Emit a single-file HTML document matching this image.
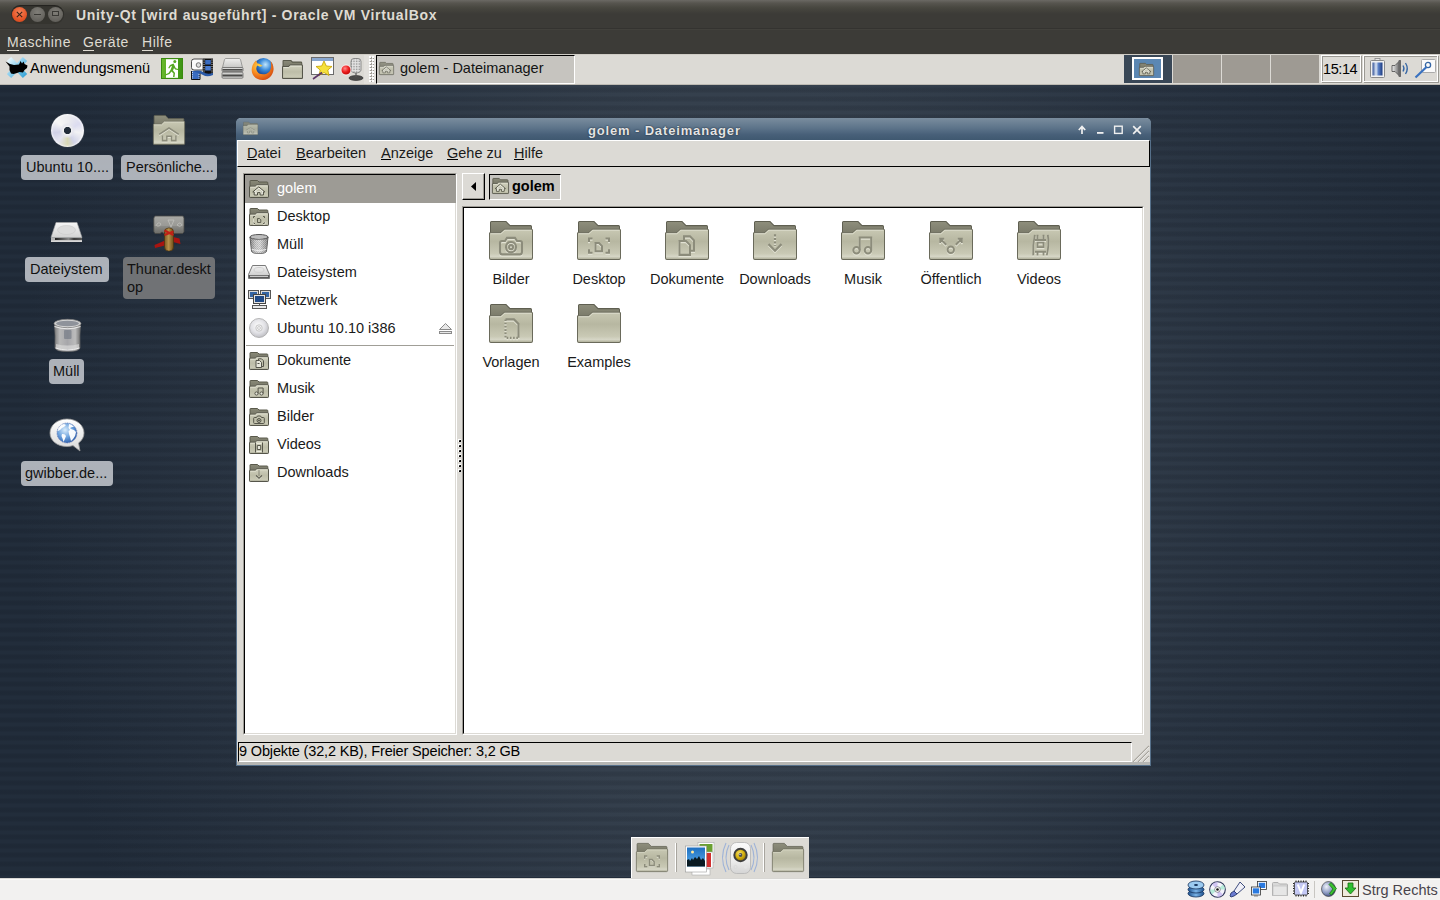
<!DOCTYPE html>
<html><head><meta charset="utf-8">
<style>
*{margin:0;padding:0;box-sizing:border-box}
html,body{width:1440px;height:900px;overflow:hidden;background:#252f3d;font-family:"Liberation Sans",sans-serif}
.a{position:absolute}
svg{display:block;position:absolute;overflow:visible}
.t{position:absolute;white-space:nowrap;line-height:1}
#htitle{left:0;top:0;width:1440px;height:29px;background:linear-gradient(#6b6964 0px,#57554f 3px,#47463f 8px,#3c3b37 14px)}
#hmenu{left:0;top:29px;width:1440px;height:25px;background:#3c3b37;border-top:1px solid #42413c;box-shadow:0 -1px 0 #343330}
.hm{color:#dfdbd2;font-size:14px;letter-spacing:.5px}
.hm u{text-decoration:none;border-bottom:1px solid #dfdbd2}
#panel{left:0;top:54px;width:1440px;height:31px;background:#dcdad5;box-shadow:inset 0 1px 0 #cfccc5,inset 0 -1px 0 #bdbab3}
#desk{left:0;top:85px;width:1440px;height:792px;
 background:repeating-linear-gradient(180deg,rgba(6,10,18,0) 0px,rgba(6,10,18,0) 1.5px,rgba(6,10,18,.11) 3.5px,rgba(6,10,18,.13) 5px,rgba(6,10,18,.11) 6.5px,rgba(6,10,18,0) 8.5px,rgba(6,10,18,0) 9px),radial-gradient(ellipse 720px 900px at 740px 365px,#3a4451 0%,#35404d 40%,#2a3543 70%,#222d3b 100%)}
#vbstat{left:0;top:877px;width:1440px;height:23px;background:#f2f1f0;border-top:1px solid #222c3a;box-shadow:inset 0 1px 0 #d8d7d4,inset 0 2px 0 #f9f9f8}
.g{color:#1a1a1a;font-size:14.5px;letter-spacing:0;margin-top:-1px}
.g u{text-decoration:none;border-bottom:1px solid #000;display:inline-block;line-height:1;height:13.6px}
.dlab{position:absolute;background:rgba(200,204,210,.84);border-radius:4px}
.dlab .t{color:#141414}
</style></head><body>
<svg width="0" height="0" style="position:absolute">
 <defs>
  <linearGradient id="fbk" x1="0" y1="0" x2="0" y2="1"><stop offset="0" stop-color="#8e8e7c"/><stop offset="1" stop-color="#747464"/></linearGradient>
  <linearGradient id="ffr" x1="0" y1="0" x2="0" y2="1"><stop offset="0" stop-color="#c8c8b3"/><stop offset=".4" stop-color="#b7b7a1"/><stop offset=".8" stop-color="#c9c9b5"/><stop offset=".9" stop-color="#d6d6c6"/><stop offset="1" stop-color="#a9a993"/></linearGradient>
  <g id="fold">
   <path d="M2.5 0.5H17L21 4.5H41.5Q42.5 4.5 42.5 5.5V16H1.5V1.5Q1.5 .5 2.5 .5Z" fill="url(#fbk)" stroke="#5f5f51" stroke-width="1"/>
   <path d="M1 11.5H11.5L15.5 8H42.5Q43.5 8 43.5 9V36Q43.5 37.5 42 37.5H2Q.5 37.5 .5 36V12Q.5 11.5 1 11.5Z" fill="url(#ffr)" stroke="#6a6a5b" stroke-width="1"/>
   <path d="M1.5 12.5H11.8L15.8 9H42.5" stroke="#dcdccb" stroke-width="1" fill="none"/>
  </g>
  <g id="foldhome"><use href="#fold"/>
   <path d="M8.5 24.5L22 16.5 35.5 24.5M13 26V32.5H19V27H25.5V32.5H31.5V26" stroke="#e2e2d4" stroke-width="2" fill="none" transform="translate(0 1.2)"/><path d="M8.5 24.5L22 16.5 35.5 24.5M13 26V32.5H19V27H25.5V32.5H31.5V26" stroke="#8c8c7b" stroke-width="2" fill="none"/>
  </g>

  <g id="em-cam" fill="none" stroke-width="2.1"><path d="M13 19.5H16L18 16.5H26L28 19.5H31Q33 19.5 33 21.5V30Q33 32.5 31 32.5H13Q11 32.5 11 30V21.5Q11 19.5 13 19.5Z"/><circle cx="22" cy="25.5" r="5"/><circle cx="22" cy="25.5" r="2"/></g>
  <g id="em-desk" fill="none" stroke-width="2"><path d="M12 20.5V17H15.5M28.5 17H32V20.5M32 27.5V31H28.5M15.5 31H12V27.5"/><path d="M18.5 21.5H22L25 24.5V29.5H18.5Z"/></g>
  <g id="em-docs" fill="none" stroke-width="2"><path d="M19 19V15H25L29 19V29H25"/><path d="M14.5 19.5H21L25 23.5V33H14.5Z"/></g>
  <g id="em-down" fill="none" stroke-width="2.2"><path d="M22 13V24" stroke-dasharray="2 1.5"/><path d="M15.5 22.5L22 29 28.5 22.5"/></g>
  <g id="em-music" fill="none" stroke-width="2"><circle cx="15.5" cy="28.5" r="3.2"/><circle cx="27" cy="28.5" r="3.2"/><path d="M18.7 28.5V16H30.2V28.5"/></g>
  <g id="em-pub" fill="none" stroke-width="1.9"><circle cx="21.8" cy="28" r="3.2"/><path d="M17.2 23.2L11.5 17.6M11.2 21.5V17.3H15.2M26.8 23.2L32.5 17.6M28.8 17.3H32.8V21.5"/></g>
  <g id="em-vid" fill="none" stroke-width="1.8"><path d="M17.8 13.5Q15.6 23 16.2 33.5M30.8 13.5Q32.4 23 29.8 33.5"/><path d="M20.5 13.5V18.5M26.5 13.5V18.5M18 18.5H29M20.5 21H26.5V25.5H20.5ZM18 30H29M20.5 30V33.5M26.5 30V33.5"/></g>
  <g id="em-tpl" fill="none" stroke-width="2.1"><path d="M16.5 15H25L29.5 19.5V33"/><path d="M16.5 15V33H29.5" stroke-dasharray="1.6 1.6"/></g>
  <g id="f-cam"><use href="#fold"/><use href="#em-cam" stroke="#e2e2d4" transform="translate(0 1.2)"/><use href="#em-cam" stroke="#8c8c7b"/></g>
  <g id="f-desk"><use href="#fold"/><use href="#em-desk" stroke="#e2e2d4" transform="translate(0 1.2)"/><use href="#em-desk" stroke="#8c8c7b"/></g>
  <g id="f-docs"><use href="#fold"/><use href="#em-docs" stroke="#e2e2d4" transform="translate(0 1.2)"/><use href="#em-docs" stroke="#8c8c7b"/></g>
  <g id="f-down"><use href="#fold"/><use href="#em-down" stroke="#e2e2d4" transform="translate(0 1.2)"/><use href="#em-down" stroke="#8c8c7b"/></g>
  <g id="f-music"><use href="#fold"/><use href="#em-music" stroke="#e2e2d4" transform="translate(0 1.2)"/><use href="#em-music" stroke="#8c8c7b"/></g>
  <g id="f-pub"><use href="#fold"/><use href="#em-pub" stroke="#e2e2d4" transform="translate(0 1.2)"/><use href="#em-pub" stroke="#8c8c7b"/></g>
  <g id="f-vid"><use href="#fold"/><use href="#em-vid" stroke="#e2e2d4" transform="translate(0 1.2)"/><use href="#em-vid" stroke="#8c8c7b"/></g>
  <g id="f-tpl"><use href="#fold"/><use href="#em-tpl" stroke="#e2e2d4" transform="translate(0 1.2)"/><use href="#em-tpl" stroke="#8c8c7b"/></g>
  <linearGradient id="trg" x1="0" x2="1"><stop offset="0" stop-color="#6c6c6c"/><stop offset=".3" stop-color="#d8d8d8"/><stop offset=".55" stop-color="#f4f4f4"/><stop offset="1" stop-color="#707070"/></linearGradient>
  <pattern id="mesh" width="2" height="2" patternUnits="userSpaceOnUse"><rect width="2" height="2" fill="#c8c8c8"/><rect width="1" height="1" fill="#7a7a7a"/><rect x="1" y="1" width="1" height="1" fill="#8a8a8a"/></pattern>
  <g id="i-trash"><ellipse cx="10" cy="3" rx="9" ry="2.5" fill="#bdbdbd" stroke="#555"/><path d="M1 3L2.5 17Q3 19.5 10 19.5 17 19.5 17.5 17L19 3Q19 5.5 10 5.5 1 5.5 1 3Z" fill="url(#mesh)" stroke="#555"/><path d="M1 3L2.5 17Q3 19.5 10 19.5 17 19.5 17.5 17L19 3Q19 5.5 10 5.5 1 5.5 1 3Z" fill="url(#trg)" opacity=".55"/><path d="M2.8 15.5Q10 18 17.2 15.5" stroke="#eee" fill="none"/></g>
  <linearGradient id="hdg" x1="0" y1="0" x2="0" y2="1"><stop offset="0" stop-color="#f4f4f4"/><stop offset="1" stop-color="#c4c4c4"/></linearGradient>
  <g id="i-hdd"><path d="M4.5 .5H17.5L21.5 9.5V13.5H.5V9.5Z" fill="url(#hdg)" stroke="#7a7a7a"/><rect x="1" y="10" width="20" height="3" fill="#5a5a5a"/><rect x="2" y="10.8" width="18" height="1" fill="#e6e6e6"/><ellipse cx="11" cy="5" rx="5" ry="2.5" fill="none" stroke="#d0d0d0"/></g>
  <g id="i-net"><rect x=".5" y=".5" width="10" height="8" fill="#ddd" stroke="#555"/><rect x="2" y="2" width="7" height="5" fill="#3465a4"/><rect x="12.5" y=".5" width="10" height="8" fill="#ddd" stroke="#555"/><rect x="14" y="2" width="7" height="5" fill="#3465a4"/><rect x="5.5" y="4.5" width="12" height="9" fill="#e4e4e4" stroke="#444"/><rect x="7" y="6" width="9" height="6" fill="#204a87"/><rect x="4.5" y="15.5" width="14" height="3" fill="#e8e8e8" stroke="#555"/><path d="M11.5 13.5V15.5" stroke="#555"/></g>
  <radialGradient id="cdg" cx=".45" cy=".4" r=".6"><stop offset="0" stop-color="#fdfdfd"/><stop offset=".6" stop-color="#e2e2e6"/><stop offset="1" stop-color="#bfbfc4"/></radialGradient>
  <g id="i-cd"><circle cx="10" cy="10" r="9.5" fill="url(#cdg)" stroke="#a8a8a8" stroke-width=".8"/><circle cx="10" cy="10" r="3.2" fill="#f4f4f4" stroke="#bbb" stroke-width=".8"/><circle cx="10" cy="10" r="1.4" fill="#fff" stroke="#999" stroke-width=".5"/></g>

  <linearGradient id="sbk" x1="0" y1="0" x2="0" y2="1"><stop offset="0" stop-color="#8a8a78"/><stop offset="1" stop-color="#727264"/></linearGradient>
  <linearGradient id="sfr" x1="0" y1="0" x2="0" y2="1"><stop offset="0" stop-color="#d2d2c0"/><stop offset=".5" stop-color="#bdbda8"/><stop offset=".85" stop-color="#c8c8b4"/><stop offset="1" stop-color="#a8a894"/></linearGradient>
  <g id="sf">
   <path d="M1.5 .5H8.5L10 2H18Q18.8 2 18.8 2.8V8H1V1Q1 .5 1.5 .5Z" fill="url(#sbk)" stroke="#5a5a4c" stroke-width="1"/>
   <path d="M1 6.2H6.2L7.8 4.8H18.8Q19.5 4.8 19.5 5.5V16.8Q19.5 17.5 18.8 17.5H1.2Q.5 17.5 .5 16.8V6.8Q.5 6.2 1 6.2Z" fill="url(#sfr)" stroke="#55554a" stroke-width="1"/>
   <path d="M1.5 7.2H6.5L8 5.8H18.5" stroke="#e6e6d8" stroke-width=".8" fill="none"/>
  </g>
  <g id="sem-home"><path d="M3.8 11.9L9.8 6.9 15.8 11.9 14.4 11.9V15H11.1V12.6H8.5V15H5.2V11.9Z" fill="#f2f2ea" stroke="#4e4e40" stroke-width="1" stroke-linejoin="miter"/><path d="M6.6 11.2L9.8 8.6 13 11.2V13.8H12.1V11.5H7.5V13.8H6.6Z" fill="#c8c8b4"/></g>
  <g id="sem-desk" fill="none" stroke="#5e5e50" stroke-width="1"><path d="M4.5 10V8.5H6M14 8.5H15.5V10M15.5 14V15.5H14M6 15.5H4.5V14"/><path d="M8.5 10.5H10.5L11.8 11.8V14.5H8.5Z"/><path d="M4.5 11V16.5H6M14 16.5H16V14" stroke="#ecece0" stroke-width=".6"/></g>
  <g id="sem-docs" fill="none" stroke="#55554a" stroke-width="1"><path d="M9.5 8V6.8H12.5L14.5 8.8V14.5H12.5"/><path d="M7 8.5H10.5L12.5 10.5V15.5H7Z" fill="#e8e8dc"/><path d="M8.5 11.5H10.5" /></g>
  <g id="sem-music" fill="none" stroke="#55554a" stroke-width="1"><circle cx="7.5" cy="13.5" r="1.6" fill="#e8e8dc"/><circle cx="12.5" cy="13.5" r="1.6" fill="#e8e8dc"/><path d="M9.1 13.5V8H14.1V13.5"/></g>
  <g id="sem-cam" fill="none" stroke="#55554a" stroke-width="1"><path d="M5.5 9.5H7.5L8.5 8H11.5L12.5 9.5H14.5Q15.3 9.5 15.3 10.3V14.7Q15.3 15.5 14.5 15.5H5.5Q4.7 15.5 4.7 14.7V10.3Q4.7 9.5 5.5 9.5Z"/><circle cx="10" cy="12.5" r="2" /><circle cx="10" cy="12.5" r=".6" fill="#55554a"/></g>
  <g id="sem-vid" fill="none" stroke="#55554a" stroke-width="1"><path d="M6.5 6.5V16.5M13.5 6.5V16.5"/><path d="M8.3 9.5H11.7V13.5H8.3Z" fill="#e8e8dc"/><path d="M7.5 7.5H12.5M7.5 15.5H12.5" stroke="#ecece0"/></g>
  <g id="sem-down" fill="none" stroke="#55554a" stroke-width="1.1"><path d="M10 6.5V12" stroke-dasharray="1 1"/><path d="M7 11.5L10 14.5 13 11.5"/><path d="M7 12.5L10 15.5 13 12.5" stroke="#ecece0" stroke-width=".6"/></g>
  <g id="sf-home"><use href="#sf"/><use href="#sem-home"/></g>
  <g id="sf-desk"><use href="#sf"/><use href="#sem-desk"/></g>
  <g id="sf-docs"><use href="#sf"/><use href="#sem-docs"/></g>
  <g id="sf-music"><use href="#sf"/><use href="#sem-music"/></g>
  <g id="sf-cam"><use href="#sf"/><use href="#sem-cam"/></g>
  <g id="sf-vid"><use href="#sf"/><use href="#sem-vid"/></g>
  <g id="sf-down"><use href="#sf"/><use href="#sem-down"/></g>
 </defs>
</svg>
<!-- HOST TITLE -->
<div id="htitle" class="a">
 <div class="a" style="left:11px;top:5px;width:53px;height:19px;border-radius:10px;background:#35342f;box-shadow:inset 0 1px 1px rgba(0,0,0,.35)"></div>
 <div class="a" style="left:12px;top:6.5px;width:15px;height:15px;border-radius:50%;background:radial-gradient(circle at 50% 35%,#f5845b,#e45527 60%,#c8441c)"></div>
 <svg style="left:12px;top:6.5px" width="15" height="15"><path d="M4.8 4.8L10.2 10.2M10.2 4.8L4.8 10.2" stroke="#3c2418" stroke-width="1.1"/></svg>
 <div class="a" style="left:30px;top:6.5px;width:15px;height:15px;border-radius:50%;background:radial-gradient(circle at 50% 35%,#807e78,#64625d 70%,#595853)"></div>
 <div class="a" style="left:34px;top:13.5px;width:7px;height:1px;background:#3a3935"></div>
 <div class="a" style="left:48px;top:6.5px;width:15px;height:15px;border-radius:50%;background:radial-gradient(circle at 50% 35%,#807e78,#64625d 70%,#595853)"></div>
 <div class="a" style="left:52px;top:11px;width:7px;height:5px;border:1px solid #3a3935"></div>
 <div class="t" style="left:76px;top:7.5px;color:#dfdbd2;font-size:14px;font-weight:bold;letter-spacing:.68px">Unity-Qt [wird ausgeführt] - Oracle VM VirtualBox</div>
</div>
<div id="hmenu" class="a">
 <div class="t hm" style="left:7px;top:5px"><u>M</u>aschine</div>
 <div class="t hm" style="left:83px;top:5px"><u>G</u>eräte</div>
 <div class="t hm" style="left:142px;top:5px"><u>H</u>ilfe</div>
</div>
<!-- GUEST PANEL -->
<div id="panel" class="a">
 <!-- xfce menu icon -->
 <svg style="left:5px;top:3px" width="24" height="23" viewBox="0 0 24 23">
  <defs><linearGradient id="xb" x1="0" y1="0" x2="1" y2="1"><stop offset="0" stop-color="#e8f6fc"/><stop offset=".45" stop-color="#8fd0ee"/><stop offset="1" stop-color="#3aa6d8"/></linearGradient></defs>
  <path d="M4 2L20 19M20 2L4 19" stroke="url(#xb)" stroke-width="6"/>
  <path d="M0.5 4.5L5 7 9 8 14 7.5 15.5 4 17 6.5 18.5 4.5 19.5 7 22.5 8.5 22 11 19.5 13 18 15.5 14.5 15 12 16 8.5 17 6 16.5 4.5 13 4.5 9.5Z" fill="#000"/>
 </svg>
 <div class="t g" style="left:30px;top:8px;color:#000">Anwendungsmenü</div>
 <!-- exit icon -->
 <svg style="left:161px;top:4px" width="22" height="21" viewBox="0 0 22 21">
  <defs><linearGradient id="exg" x1="0" x2="1"><stop offset="0" stop-color="#6ab82e"/><stop offset="1" stop-color="#3c9412"/></linearGradient></defs>
  <rect x=".5" y=".5" width="21" height="20" fill="url(#exg)" stroke="#3a8a10"/>
  <rect x="5" y="1.2" width="12" height="18.6" fill="#fff"/>
  <circle cx="13.8" cy="3.6" r="1.5" fill="#56a822"/>
  <path d="M12.5 5.6L9 7 7.2 10 8.2 10.5 9.8 8.3 11 8 9.5 12 7.5 15 4 16.5 4.5 17.6 8.5 16 10.5 13.5 12.5 15.5 12 19 13.5 19 14 15 12 12.5 13 10 14.2 11.5 17 12 17.2 11 14.8 10.3Z" fill="#56a822"/>
 </svg>
 <!-- multimedia icon -->
 <svg style="left:191px;top:4px" width="23" height="22" viewBox="0 0 23 22">
  <path d="M3 1H12V12H3Q.5 12 .5 9.5V3.5Q.5 1 3 1Z" fill="#fafafa" stroke="#3a3a3a" stroke-width=".9"/>
  <circle cx="7.5" cy="7" r="2.3" fill="#ddd" stroke="#6a6a6a" stroke-width=".9"/>
  <rect x="12" y=".5" width="10" height="16.5" fill="#111"/>
  <path d="M13 1.5V16M21 1.5V16" stroke="#fff" stroke-width=".9" stroke-dasharray="1 1.2"/>
  <rect x="14.2" y="2" width="5.6" height="4.5" fill="#3a6cc0"/><rect x="14.2" y="8" width="5.6" height="4.5" fill="#4a7cd0"/>
  <path d="M1 13.5Q8 11.5 12 14 16 17 22 15V17Q16 19.5 12 17 8 14.5 1 16.5Z" fill="#2a5aa8"/>
  <path d="M.5 13V21.5H9V15.5" fill="#3a6cc0" stroke="#111" stroke-width="1"/>
  <path d="M1.5 14V21M8 16V21" stroke="#fff" stroke-width=".8" stroke-dasharray="1 1.2"/>
 </svg>
 <!-- hdd icon -->
 <svg style="left:221px;top:4px" width="23" height="21" viewBox="0 0 23 21">
  <defs><linearGradient id="hdp" x1="0" y1="0" x2="0" y2="1"><stop offset="0" stop-color="#f0f0ee"/><stop offset="1" stop-color="#c8c8c6"/></linearGradient></defs>
  <path d="M3.5 1.5Q4 .5 5 .5H18Q19 .5 19.5 1.5L21.5 9.5H1.5Z" fill="url(#hdp)" stroke="#8a8a88" stroke-width=".8"/>
  <rect x="1" y="9.5" width="21" height="4" rx=".8" fill="#d8d8d6" stroke="#6a6a68" stroke-width=".8"/>
  <rect x="1.5" y="11" width="20" height="1.6" fill="#4a4a48"/>
  <rect x="1" y="14.2" width="21" height="6" rx="1" fill="#d0d0ce" stroke="#6a6a68" stroke-width=".8"/>
  <rect x="1.5" y="16.5" width="20" height="2" fill="#4a4a48"/>
 </svg>
 <!-- firefox -->
 <svg style="left:250px;top:3px" width="24" height="24" viewBox="0 0 24 24">
  <defs><radialGradient id="ffb" cx=".6" cy=".35" r=".55"><stop offset="0" stop-color="#bfe6ff"/><stop offset=".55" stop-color="#3a8ad8"/><stop offset="1" stop-color="#1a4a98"/></radialGradient>
  <radialGradient id="ffo" cx=".35" cy=".3" r=".85"><stop offset="0" stop-color="#ffd84a"/><stop offset=".45" stop-color="#f88a20"/><stop offset="1" stop-color="#c8380c"/></radialGradient></defs>
  <circle cx="13.5" cy="10.5" r="9.5" fill="url(#ffb)"/>
  <path d="M6 3.5C2.5 6.5 1 11 2 15.5 3.5 20.5 8.5 23.5 13.5 23 19 22.5 23 18 23.5 13 24 9 22 5.5 20.5 4 21.5 7 21.5 11 19.5 14.5 17 17.5 12.5 18 9 16.5 6 14 5.5 10.5 7.5 8.5 9 10 11.5 10 12.5 8.5 10.5 7.5 9 6 7.5 6.5 8 4.5Z" fill="url(#ffo)"/>
 </svg>
 <!-- folder -->
 <svg style="left:282px;top:6px" width="21" height="19" viewBox="0 0 20 18" preserveAspectRatio="none"><use href="#sf"/></svg>
 <!-- star window -->
 <svg style="left:311px;top:3px" width="23" height="23" viewBox="0 0 23 23">
  <rect x="0.5" y="0.5" width="22" height="17" fill="#fff" stroke="#6b6b6b"/>
  <rect x="1" y="1" width="21" height="3" fill="#8aa8d0"/>
  <path d="M13 4L15.3 9 21 9.5 16.8 13 18 18.5 13 15.5 8 18.5 9.2 13 5 9.5 10.7 9Z" fill="#f5e13c" stroke="#c4a000" stroke-width=".8"/>
  <path d="M2 22L11 15.5" stroke="#5c3566" stroke-width="1.6"/>
 </svg>
 <!-- mic -->
 <svg style="left:340px;top:4px" width="23" height="23" viewBox="0 0 23 23">
  <defs><pattern id="mm" width="1.6" height="1.6" patternUnits="userSpaceOnUse"><rect width="1.6" height="1.6" fill="#e4e4e4"/><rect width=".8" height=".8" fill="#8a8a8a"/></pattern>
  <radialGradient id="rec" cx=".4" cy=".35" r=".7"><stop offset="0" stop-color="#ff8a8a"/><stop offset=".5" stop-color="#ee2020"/><stop offset="1" stop-color="#b00000"/></radialGradient></defs>
  <ellipse cx="16" cy="20" rx="7" ry="2.5" fill="#4a4a4a" stroke="#2a2a2a" stroke-width=".6"/>
  <path d="M16 14V19" stroke="#555" stroke-width="1.2"/>
  <path d="M14 .5H18A3 3 0 0 1 21 3.5V12A5 3 0 0 1 11 12V3.5A3 3 0 0 1 14 .5Z" fill="url(#mm)" stroke="#6a6a6a" stroke-width=".7"/>
  <circle cx="6" cy="12" r="5" fill="url(#rec)" stroke="#fff" stroke-width=".8"/>
 </svg>
 <!-- separator dots -->
 <div class="a" style="left:364px;top:1px;width:12px;height:29px;background:#e2e0dc"></div>
  <div class="a" style="left:369px;top:2px;width:5px;height:26px;background-image:radial-gradient(circle at 1px 1px,#fff .9px,transparent 1.1px),radial-gradient(circle at 1px 1px,#a09d96 .9px,transparent 1.1px);background-size:3px 3px,3px 3px;background-position:0 0,1px 1px"></div>
 <!-- task button -->
 <div class="a" style="left:376px;top:1px;width:199px;height:29px;background:#c6c4bf;border-top:1px solid #000;border-left:1px solid #000;border-bottom:1px solid #fff;border-right:1px solid #fff"></div>
 <svg style="left:379px;top:8px" width="15" height="13" viewBox="0 0 20 18" preserveAspectRatio="none" opacity=".8"><use href="#sf-home"/></svg>
 <div class="t g" style="left:400px;top:8px;color:#141414">golem - Dateimanager</div>
 <!-- workspaces -->
 <div class="a" style="left:1124px;top:1px;width:48px;height:28px;background:#394756"></div>
 <div class="a" style="left:1132px;top:3px;width:31px;height:23px;background:#5b87b3;border:2px solid #fff"></div>
 <svg style="left:1139px;top:9px" width="15" height="13" viewBox="0 0 20 18" preserveAspectRatio="none"><use href="#sf-home"/></svg>
 <div class="a" style="left:1173px;top:1px;width:48px;height:28px;background:#9e9a93"></div>
 <div class="a" style="left:1222px;top:1px;width:48px;height:28px;background:#9e9a93"></div>
 <div class="a" style="left:1271px;top:1px;width:48px;height:28px;background:#9e9a93"></div>
 <!-- clock -->
 <div class="a" style="left:1321px;top:1px;width:40px;height:27px;border:1px solid #fff;box-shadow:inset 1px 1px 0 #9a9892,1px 1px 0 #9a9892"></div>
 <div class="t g" style="left:1323px;top:9px;color:#000;letter-spacing:-.4px">15:14</div>
 <!-- systray -->
 <div class="a" style="left:1363px;top:1px;width:75px;height:27px;border:1px solid #fff;box-shadow:inset 1px 1px 0 #9a9892,1px 1px 0 #9a9892"></div>
 <svg style="left:1370px;top:4px" width="15" height="20" viewBox="0 0 15 20">
  <defs><linearGradient id="bat" x1="0" x2="1"><stop offset="0" stop-color="#2c4d95"/><stop offset=".35" stop-color="#dce6f5"/><stop offset=".6" stop-color="#5a7fc4"/><stop offset="1" stop-color="#1d3b80"/></linearGradient></defs>
  <rect x="5" y="0.5" width="5" height="2" fill="#e8e8e8" stroke="#888" stroke-width=".8"/>
  <rect x="0.5" y="2.5" width="14" height="17" rx="1" fill="#f2f2f2" stroke="#8a8a8a"/>
  <rect x="2.5" y="4.5" width="10" height="13" fill="url(#bat)"/>
 </svg>
 <svg style="left:1391px;top:5px" width="19" height="19" viewBox="0 0 19 19">
  <defs><linearGradient id="spk" x1="0" x2="1"><stop offset="0" stop-color="#f0f0f0"/><stop offset=".5" stop-color="#a8a8a8"/><stop offset="1" stop-color="#5a5a5a"/></linearGradient></defs><path d="M1 6.5H4L9 1.5V17.5L4 12.5H1Z" fill="url(#spk)" stroke="#4a4a4a" stroke-width=".8"/><rect x="7.5" y="1" width="2.5" height="17" rx="1" fill="#6a6a6a"/>
  <path d="M12 6.5Q14 9.5 12 12.5M14.5 4Q18 9.5 14.5 15" stroke="#3465a4" stroke-width="1.3" fill="none"/>
 </svg>
 <svg style="left:1415px;top:5px" width="21" height="19" viewBox="0 0 21 19">
  <rect x="6.5" y="0.5" width="14" height="13" rx="1" fill="#fafafa" stroke="#aaa"/>
  <circle cx="13" cy="6" r="2.6" fill="none" stroke="#3465a4" stroke-width="1.3"/>
  <path d="M0.5 18.5L11.5 8" stroke="#3a72c0" stroke-width="2.2"/>
 </svg>
</div>
<div id="desk" class="a"></div>
<!-- DESKTOP ICONS -->
<div class="a" style="left:51px;top:114px;width:33px;height:33px;border-radius:50%;background:radial-gradient(circle,#232d3b 0 3.4px,#f4f4f4 3.8px,#e6e6ee 5.5px,rgba(230,230,240,0) 8px),conic-gradient(from 10deg,#ebebef,#dcdcf0 50deg,#f2f2f4 90deg,#d2d4e8 140deg,#d8d8b4 170deg,#e4e4f0 210deg,#cfd0e6 250deg,#f6f6f6 300deg,#ebebef);box-shadow:inset 0 0 2px 1px rgba(255,255,255,.8),0 0 1px #9a9aa0"></div>
<div class="dlab" style="left:21px;top:155px;width:92px;height:25px"></div>
<div class="t g" style="left:26px;top:161px;color:#111">Ubuntu 10....</div>
<svg style="left:153px;top:115px" width="32" height="30" viewBox="0 0 44 38" preserveAspectRatio="none"><use href="#foldhome"/></svg>
<div class="dlab" style="left:121px;top:155px;width:96px;height:25px"></div>
<div class="t g" style="left:126px;top:161px;color:#111">Persönliche...</div>
<svg style="left:50px;top:221px" width="33" height="22" viewBox="0 0 33 22">
 <defs><linearGradient id="hd2" x1="0" y1="0" x2="0" y2="1"><stop offset="0" stop-color="#f6f6f6"/><stop offset="1" stop-color="#d2d2d2"/></linearGradient>
 <linearGradient id="hd3" x1="0" x2="1"><stop offset="0" stop-color="#1e1e1e"/><stop offset=".5" stop-color="#8a8a8a"/><stop offset=".7" stop-color="#3a3a3a"/><stop offset="1" stop-color="#5a5a5a"/></linearGradient></defs>
 <path d="M6 1.5H27L32 16.5H1Z" fill="url(#hd2)" stroke="#a8a8a8" stroke-width=".6"/>
 <ellipse cx="16.5" cy="9" rx="9" ry="4.5" fill="#dcdcdc" stroke="#c4c4c4" stroke-width=".5"/>
 <rect x="1" y="16.5" width="31" height="4.5" fill="#b4b4b4"/>
 <rect x="5" y="17" width="27" height="2" fill="url(#hd3)"/>
 <rect x="1" y="19.5" width="31" height="1.5" fill="#d8d8d8"/>
</svg>
<div class="dlab" style="left:25px;top:257px;width:84px;height:25px"></div>
<div class="t g" style="left:30px;top:263px;color:#111">Dateiystem</div>
<svg style="left:153px;top:215px" width="32" height="37" viewBox="0 0 32 37">
 <defs><linearGradient id="hm" x1="0" y1="0" x2="0" y2="1"><stop offset="0" stop-color="#a8a8a4"/><stop offset=".55" stop-color="#9a9a96"/><stop offset=".6" stop-color="#8a8a86"/><stop offset="1" stop-color="#6c6c68"/></linearGradient>
 <linearGradient id="hw" x1="0" x2="1"><stop offset="0" stop-color="#7a5a22"/><stop offset=".45" stop-color="#b8904a"/><stop offset="1" stop-color="#6e4e1a"/></linearGradient></defs>
 <path d="M2 1H30L31 3V17L29.5 18.5H11L9 17 7 18.5H2L.8 16.5V3Z" fill="url(#hm)" stroke="#4a4a46" stroke-width=".8"/>
 <path d="M3 11Q5 6 8 9 7 12 4 11M15 5L21 5 18 12ZM24 10Q27 6 29 10 27 13 24 10" stroke="#c4c4c0" fill="none" stroke-width=".7"/>
 <path d="M1.5 30L12 25.5V30.5L2 33Z" fill="#a81410"/><path d="M20 22L26.5 23.5 27.5 29 20 27Z" fill="#a81410"/>
 <rect x="11.5" y="13" width="9" height="23" rx="4" fill="url(#hw)" stroke="#4a3410" stroke-width=".7"/>
 <path d="M11.5 15.5L20.5 20M11.5 20L20.5 16.5" stroke="#c02016" stroke-width="2"/>
</svg>
<div class="dlab" style="left:123px;top:257px;width:92px;height:42px;background:#707275"></div>
<div class="t g" style="left:127px;top:263px;color:#111">Thunar.deskt</div>
<div class="t g" style="left:127px;top:281px;color:#111">op</div>
<svg style="left:53px;top:318px" width="29" height="34" viewBox="0 0 29 34">
 <defs><linearGradient id="tr2" x1="0" x2="1"><stop offset="0" stop-color="#7e7e7e"/><stop offset=".2" stop-color="#b8b8b8"/><stop offset=".5" stop-color="#a6a6aa"/><stop offset=".8" stop-color="#bcbcbc"/><stop offset="1" stop-color="#6e6e6e"/></linearGradient></defs>
 <path d="M1.5 6Q2.5 18 2 30Q3 33.5 14.5 33.5 26 33.5 27 30Q26.5 18 27.5 6Z" fill="url(#tr2)" stroke="#6a6a6a" stroke-width=".7"/>
 <rect x="11" y="12" width="7.5" height="9" rx="1" fill="#6e7480" opacity=".6"/>
 <path d="M3 26Q14.5 29 26 26V30Q14.5 33 3 30Z" fill="#d8d8d8" opacity=".7"/>
 <ellipse cx="14.5" cy="5.5" rx="13.5" ry="4.2" fill="#d4d4d4" stroke="#7a7a7a" stroke-width=".7"/>
 <ellipse cx="14.5" cy="5.5" rx="11.5" ry="2.8" fill="#8e929a"/>
 <path d="M1.5 8.5Q14.5 13 27.5 8.5" stroke="#e8e8e8" fill="none" stroke-width="1.2"/>
 <path d="M2.5 30Q14.5 34 26.5 30" stroke="#eeeeee" fill="none" stroke-width="1"/>
</svg>
<div class="dlab" style="left:49px;top:359px;width:35px;height:25px"></div>
<div class="t g" style="left:53px;top:365px;color:#111">Müll</div>
<svg style="left:49px;top:418px" width="36" height="34" viewBox="0 0 36 34">
 <defs><radialGradient id="glb" cx=".4" cy=".35" r=".7"><stop offset="0" stop-color="#d8ecfc"/><stop offset=".55" stop-color="#6aa0dc"/><stop offset="1" stop-color="#2a5aa8"/></radialGradient>
 <linearGradient id="bub" x1="0" y1="0" x2="0" y2="1"><stop offset="0" stop-color="#fff"/><stop offset="1" stop-color="#d8d8d8"/></linearGradient></defs>
 <path d="M18 1C8 1 1 7.5 1 15 1 22.5 8 28.5 18 28.5 20 28.5 22 28.2 24 27.6L31 33 29.5 25C33 22.5 35 19 35 15 35 7.5 28 1 18 1Z" fill="url(#bub)" stroke="#9a9a9a" stroke-width=".8"/>
 <circle cx="18" cy="15" r="10" fill="url(#glb)"/>
 <path d="M9 10Q11 6 15 6L17 7 15 9 13 10 11 12 9 13Z M13 16Q16 15.5 17 18 16 21 14.5 24 13.5 20 12.5 18Z M20 6Q23 6 25 9L23 9 21 10 22 11 25 12 27 14 26 18 24 21 22 23 21 19 20 16 19.5 13 21 12 19.5 10Z" fill="#fff" opacity=".95"/><circle cx="18" cy="15" r="10" fill="none" stroke="#4a5aa0" stroke-width=".6" stroke-dasharray="1 .8"/>
</svg>
<div class="dlab" style="left:21px;top:461px;width:92px;height:25px"></div>
<div class="t g" style="left:25px;top:467px;color:#111">gwibber.de...</div>
<!-- DOCK -->
<div class="a" style="left:0;top:0;z-index:2">
<div class="a" style="left:631px;top:837px;width:178px;height:41px;background:#dcdad5;border-top:1px solid #fff;border-left:1px solid #fff"></div>
<svg style="left:636px;top:843px" width="32" height="29" viewBox="0 0 44 38" preserveAspectRatio="none"><use href="#f-desk"/></svg>
<div class="a" style="left:675px;top:843px;width:2px;height:29px;border-left:1px solid #fff;border-right:1px solid #a8a59e"></div>
<svg style="left:685px;top:842px" width="30" height="33" viewBox="0 0 30 33">
 <defs><linearGradient id="sky" x1="0" y1="0" x2="0" y2="1"><stop offset="0" stop-color="#1f6fc0"/><stop offset="1" stop-color="#5ab0f0"/></linearGradient></defs>
 <rect x="13" y="0.5" width="16" height="20" fill="#fff" stroke="#aaa" stroke-width=".6"/><rect x="14.5" y="2" width="13" height="14" fill="#6aa030"/>
 <rect x="7" y="27" width="18" height="6" fill="#fff" stroke="#aaa" stroke-width=".6"/>
 <rect x="13" y="10" width="15" height="16" fill="#fff" stroke="#aaa" stroke-width=".6"/><rect x="21" y="11" width="5" height="14" fill="#d03030"/>
 <rect x="0.5" y="4" width="21" height="26" fill="#fff" stroke="#999" stroke-width=".6"/>
 <rect x="2" y="5.5" width="18" height="19" fill="url(#sky)"/>
 <circle cx="7.5" cy="10" r="1.5" fill="#ffe9a0"/>
 <path d="M2 24.5V18L4 17 5 19 7 16 8 18 10 15 12 17 14 14 16 18 18 16 20 19V24.5Z" fill="#0a1a22"/>
</svg>
<svg style="left:722px;top:841px" width="36" height="33" viewBox="0 0 36 33">
 <defs><linearGradient id="spb" x1="0" y1="0" x2="0" y2="1"><stop offset="0" stop-color="#fafafa"/><stop offset=".6" stop-color="#ececec"/><stop offset="1" stop-color="#d4d4d4"/></linearGradient>
 <radialGradient id="spc" cx=".4" cy=".35" r=".65"><stop offset="0" stop-color="#f4e070"/><stop offset=".6" stop-color="#d8b410"/><stop offset="1" stop-color="#a88808"/></radialGradient></defs>
 <path d="M7 4Q1 16.5 7 29M4 2Q-3 16.5 4 31M29 4Q35 16.5 29 29M32 2Q39 16.5 32 31" stroke="#8aa6d8" stroke-width="1.1" fill="none" opacity=".75"/>
 <rect x="8.5" y="1.5" width="20" height="31" rx="6" fill="url(#spb)" stroke="#b4b4b4" stroke-width=".8"/>
 <circle cx="18.5" cy="14" r="7.2" fill="#3e3e3e"/>
 <circle cx="18.5" cy="14" r="5.2" fill="url(#spc)"/>
 <circle cx="18.5" cy="14" r="1.9" fill="#505050"/><circle cx="18" cy="13.4" r=".7" fill="#ddd"/>
 <circle cx="13.5" cy="26" r="1.6" fill="none" stroke="#d8d8d8" stroke-width=".8"/><circle cx="23.5" cy="26" r="1.8" fill="#e4e4e4"/>
</svg>
<div class="a" style="left:763px;top:843px;width:2px;height:29px;border-left:1px solid #fff;border-right:1px solid #a8a59e"></div>
<svg style="left:772px;top:843px" width="32" height="29" viewBox="0 0 44 38" preserveAspectRatio="none"><use href="#fold"/></svg>
</div>
<!-- FILE MANAGER WINDOW -->
<div id="win" class="a" style="left:236px;top:118px;width:915px;height:648px">
 <div class="a" style="left:0;top:0;width:915px;height:648px;background:#dcdad5;border-radius:5px 5px 0 0;border:1px solid #56708a;border-top:none"></div>
 <div class="a" style="left:0;top:0;width:915px;height:22px;border-radius:5px 5px 0 0;background:linear-gradient(#7a8d9e,#5d748a 45%,#486079 75%,#3f5870)"></div>
 <svg style="left:7px;top:4px" width="15" height="13" viewBox="0 0 44 38" preserveAspectRatio="none" opacity=".85"><use href="#foldhome"/></svg>
 <div class="t" style="left:352px;top:5.5px;color:#e4e4e4;font-size:13px;font-weight:bold;letter-spacing:.85px;text-shadow:0 0 1px #1c2a3a,0 0 2px #2a3a4a">golem - Dateimanager</div>
 <svg style="left:841px;top:7px" width="70" height="10" viewBox="0 0 70 10">
  <path d="M5 9V3M1.8 5L5 1.6 8.2 5" stroke="#f0f0f0" stroke-width="1.7" fill="none"/>
  <rect x="20" y="7" width="6.5" height="1.8" fill="#f0f0f0"/>
  <rect x="37.6" y="1.2" width="7.6" height="7.2" fill="none" stroke="#f0f0f0" stroke-width="1.4"/>
  <path d="M56.2 1.2L63.8 8.8M63.8 1.2L56.2 8.8" stroke="#f0f0f0" stroke-width="1.7"/>
 </svg>
 <!-- menubar -->
 <div class="a" style="left:1px;top:22px;width:913px;height:27px;border-top:1px solid #fff;border-left:1px solid #fff;border-bottom:1px solid #000;border-right:1px solid #000"></div>
 <div class="t g" style="left:11px;top:29px"><u>D</u>atei</div>
 <div class="t g" style="left:60px;top:29px"><u>B</u>earbeiten</div>
 <div class="t g" style="left:145px;top:29px"><u>A</u>nzeige</div>
 <div class="t g" style="left:211px;top:29px"><u>G</u>ehe zu</div>
 <div class="t g" style="left:278px;top:29px"><u>H</u>ilfe</div>
 <!-- sidebar -->
 <div class="a" style="left:7px;top:55px;width:214px;height:562px;background:#fff;border-top:1px solid #9d9b95;border-left:1px solid #9d9b95;border-bottom:1px solid #fff;border-right:1px solid #fff">
  <div class="a" style="left:0;top:0;width:212px;height:560px;border-top:1px solid #000;border-left:1px solid #000;border-bottom:1px solid #dcdad5;border-right:1px solid #dcdad5"></div>
 </div>
 <div class="a" style="left:9px;top:57px;width:211px;height:28px;background:#9d9b95"></div>
 <svg style="left:13px;top:62px" width="20" height="18" viewBox="0 0 20 18"><use href="#sf-home"/></svg>
 <div class="t g" style="left:41px;top:64px;color:#fff">golem</div>
 <svg style="left:13px;top:90px" width="20" height="18" viewBox="0 0 20 18"><use href="#sf-desk"/></svg>
 <div class="t g" style="left:41px;top:92px;color:#1a1a1a">Desktop</div>
 <svg style="left:13px;top:116px" width="20" height="20" viewBox="0 0 20 20"><use href="#i-trash"/></svg>
 <div class="t g" style="left:41px;top:120px;color:#1a1a1a">Müll</div>
 <svg style="left:12px;top:147px" width="22" height="14" viewBox="0 0 22 14"><use href="#i-hdd"/></svg>
 <div class="t g" style="left:41px;top:148px;color:#1a1a1a">Dateisystem</div>
 <svg style="left:12px;top:172px" width="23" height="19" viewBox="0 0 23 19"><use href="#i-net"/></svg>
 <div class="t g" style="left:41px;top:176px;color:#1a1a1a">Netzwerk</div>
 <svg style="left:13px;top:200px" width="20" height="20" viewBox="0 0 20 20"><use href="#i-cd"/></svg>
 <div class="t g" style="left:41px;top:204px;color:#1a1a1a">Ubuntu 10.10 i386</div>
 <svg style="left:203px;top:205px" width="13" height="11"><path d="M6.5 .5L12.5 6.5H.5Z" fill="#e8e8e8" stroke="#8a8a8a"/><rect x=".5" y="8.5" width="12" height="2" fill="#e8e8e8" stroke="#8a8a8a"/></svg>
 <div class="a" style="left:10px;top:227px;width:208px;height:1px;background:#a09e97"></div>
 <svg style="left:13px;top:234px" width="20" height="18" viewBox="0 0 20 18"><use href="#sf-docs"/></svg>
 <div class="t g" style="left:41px;top:236px">Dokumente</div>
 <svg style="left:13px;top:262px" width="20" height="18" viewBox="0 0 20 18"><use href="#sf-music"/></svg>
 <div class="t g" style="left:41px;top:264px">Musik</div>
 <svg style="left:13px;top:290px" width="20" height="18" viewBox="0 0 20 18"><use href="#sf-cam"/></svg>
 <div class="t g" style="left:41px;top:292px">Bilder</div>
 <svg style="left:13px;top:318px" width="20" height="18" viewBox="0 0 20 18"><use href="#sf-vid"/></svg>
 <div class="t g" style="left:41px;top:320px">Videos</div>
 <svg style="left:13px;top:346px" width="20" height="18" viewBox="0 0 20 18"><use href="#sf-down"/></svg>
 <div class="t g" style="left:41px;top:348px">Downloads</div>
 <!-- pane handle -->
 <div class="a" style="left:222px;top:321px;width:3px;height:3px;background:#fff"></div><div class="a" style="left:223px;top:322px;width:2px;height:2px;background:#000;border-top-left-radius:1px"></div><div class="a" style="left:222px;top:326px;width:3px;height:3px;background:#fff"></div><div class="a" style="left:223px;top:327px;width:2px;height:2px;background:#000;border-top-left-radius:1px"></div><div class="a" style="left:222px;top:331px;width:3px;height:3px;background:#fff"></div><div class="a" style="left:223px;top:332px;width:2px;height:2px;background:#000;border-top-left-radius:1px"></div><div class="a" style="left:222px;top:336px;width:3px;height:3px;background:#fff"></div><div class="a" style="left:223px;top:337px;width:2px;height:2px;background:#000;border-top-left-radius:1px"></div><div class="a" style="left:222px;top:341px;width:3px;height:3px;background:#fff"></div><div class="a" style="left:223px;top:342px;width:2px;height:2px;background:#000;border-top-left-radius:1px"></div><div class="a" style="left:222px;top:346px;width:3px;height:3px;background:#fff"></div><div class="a" style="left:223px;top:347px;width:2px;height:2px;background:#000;border-top-left-radius:1px"></div><div class="a" style="left:222px;top:351px;width:3px;height:3px;background:#fff"></div><div class="a" style="left:223px;top:352px;width:2px;height:2px;background:#000;border-top-left-radius:1px"></div>
 <!-- back button -->
 <div class="a" style="left:226px;top:55px;width:23px;height:27px;background:#dcdad5;border-top:1px solid #fff;border-left:1px solid #fff;border-bottom:1px solid #000;border-right:1px solid #000;box-shadow:inset -1px -1px 0 #9d9b95"></div>
 <svg style="left:235px;top:64px" width="5" height="9"><path d="M5 0V9L0 4.5Z" fill="#000"/></svg>
 <!-- path button -->
 <div class="a" style="left:253px;top:56px;width:72px;height:26px;background:#c6c4bf;border-top:1px solid #000;border-left:1px solid #000;border-bottom:1px solid #fff;border-right:1px solid #fff"></div>
 <svg style="left:256px;top:60px" width="17" height="16" viewBox="0 0 20 18" preserveAspectRatio="none"><use href="#sf-home"/></svg>
 <div class="t g" style="left:276px;top:62px;font-weight:bold;color:#000">golem</div>
 <!-- icon view -->
 <div class="a" style="left:226px;top:88px;width:682px;height:529px;background:#fff;border-top:1px solid #9d9b95;border-left:1px solid #9d9b95;border-bottom:1px solid #fff;border-right:1px solid #fff">
  <div class="a" style="left:0;top:0;width:680px;height:527px;border-top:1px solid #000;border-left:1px solid #000;border-bottom:1px solid #dcdad5;border-right:1px solid #dcdad5"></div>
 </div>
 <svg style="left:253px;top:103px" width="44" height="39" viewBox="0 0 44 38" preserveAspectRatio="none"><use href="#f-cam"/></svg>
 <div class="t g" style="left:231px;top:155px;width:88px;text-align:center">Bilder</div>
 <svg style="left:341px;top:103px" width="44" height="39" viewBox="0 0 44 38" preserveAspectRatio="none"><use href="#f-desk"/></svg>
 <div class="t g" style="left:319px;top:155px;width:88px;text-align:center">Desktop</div>
 <svg style="left:429px;top:103px" width="44" height="39" viewBox="0 0 44 38" preserveAspectRatio="none"><use href="#f-docs"/></svg>
 <div class="t g" style="left:407px;top:155px;width:88px;text-align:center">Dokumente</div>
 <svg style="left:517px;top:103px" width="44" height="39" viewBox="0 0 44 38" preserveAspectRatio="none"><use href="#f-down"/></svg>
 <div class="t g" style="left:495px;top:155px;width:88px;text-align:center">Downloads</div>
 <svg style="left:605px;top:103px" width="44" height="39" viewBox="0 0 44 38" preserveAspectRatio="none"><use href="#f-music"/></svg>
 <div class="t g" style="left:583px;top:155px;width:88px;text-align:center">Musik</div>
 <svg style="left:693px;top:103px" width="44" height="39" viewBox="0 0 44 38" preserveAspectRatio="none"><use href="#f-pub"/></svg>
 <div class="t g" style="left:671px;top:155px;width:88px;text-align:center">Öffentlich</div>
 <svg style="left:781px;top:103px" width="44" height="39" viewBox="0 0 44 38" preserveAspectRatio="none"><use href="#f-vid"/></svg>
 <div class="t g" style="left:759px;top:155px;width:88px;text-align:center">Videos</div>
 <svg style="left:253px;top:186px" width="44" height="39" viewBox="0 0 44 38" preserveAspectRatio="none"><use href="#f-tpl"/></svg>
 <div class="t g" style="left:231px;top:238px;width:88px;text-align:center">Vorlagen</div>
 <svg style="left:341px;top:186px" width="44" height="39" viewBox="0 0 44 38" preserveAspectRatio="none"><use href="#fold"/></svg>
 <div class="t g" style="left:319px;top:238px;width:88px;text-align:center">Examples</div>
 <!-- statusbar -->
 <div class="a" style="left:2px;top:624px;width:894px;height:20px;border-top:1px solid #000;border-left:1px solid #000;border-bottom:1px solid #fff;border-right:1px solid #fff"></div>
 <div class="t g" style="left:3px;top:627px;color:#000;letter-spacing:-.15px">9 Objekte (32,2 KB), Freier Speicher: 3,2 GB</div>
 <svg style="left:896px;top:627px" width="18" height="17"><path d="M17 1L1 17M17 6L6 17M17 11L11 17" stroke="#a8a59d" stroke-width="1.2"/><path d="M17 2L2 17M17 7L7 17M17 12L12 17" stroke="#fff" stroke-width=".6"/></svg>
 <div class="a" style="left:1px;top:644px;width:913px;height:3px;background:#b6b6b3"></div>
</div>
<div id="vbstat" class="a"></div>
<!-- VBOX STATUS ICONS -->
<svg style="left:1187px;top:880px" width="18" height="18" viewBox="0 0 18 18">
 <defs><linearGradient id="vhd" x1="0" y1="0" x2="1" y2="0"><stop offset="0" stop-color="#1c4f8c"/><stop offset=".5" stop-color="#7ab4e8"/><stop offset="1" stop-color="#1c4f8c"/></linearGradient></defs>
 <ellipse cx="9" cy="13.5" rx="8" ry="3.5" fill="url(#vhd)" stroke="#13305a" stroke-width=".8"/>
 <ellipse cx="9" cy="9.5" rx="8" ry="3.5" fill="url(#vhd)" stroke="#13305a" stroke-width=".8"/>
 <ellipse cx="9" cy="5" rx="8" ry="4" fill="#9ccaf0" stroke="#13305a" stroke-width=".8"/>
 <ellipse cx="9" cy="5" rx="2" ry="1" fill="#13305a"/>
</svg>
<svg style="left:1209px;top:881px" width="17" height="17" viewBox="0 0 17 17">
 <circle cx="8.5" cy="8.5" r="7.8" fill="#f4f4fc" stroke="#30365a" stroke-width="1.1"/>
 <path d="M8.5 8.5L3 3.5A7.5 7.5 0 0 1 8.5 1ZM8.5 8.5L14 13.5A7.5 7.5 0 0 1 8.5 16Z" fill="#c8b8f0" opacity=".8"/>
 <path d="M8.5 8.5L1 8.5A7.5 7.5 0 0 0 3 13.5ZM8.5 8.5L16 8.5A7.5 7.5 0 0 0 14 3.5Z" fill="#a8e8d0" opacity=".8"/>
 <circle cx="8.5" cy="8.5" r="2.8" fill="#fff" stroke="#555" stroke-width=".6"/>
 <circle cx="8.5" cy="8.5" r="1.3" fill="#111"/>
</svg>
<svg style="left:1229px;top:881px" width="17" height="17" viewBox="0 0 17 17">
 <path d="M11 1L16 6 8 13 5 10Z" fill="#f0f0f8" stroke="#2a3a70" stroke-width=".9"/>
 <path d="M5 10L8 13 5 15 2 16 1 15 2 12Z" fill="#6a7ad0" stroke="#2a3a70" stroke-width=".9"/>
</svg>
<svg style="left:1251px;top:881px" width="16" height="16" viewBox="0 0 16 16">
 <rect x="6.5" y=".5" width="9" height="8" fill="#fff" stroke="#333" stroke-width=".8"/><rect x="7.8" y="1.8" width="6.4" height="5.2" fill="#2a7ae0"/>
 <rect x=".5" y="6" width="9" height="8" fill="#fff" stroke="#333" stroke-width=".8"/><rect x="1.8" y="7.3" width="6.4" height="5.2" fill="#2a7ae0"/>
 <rect x="3" y="14" width="4" height="1.5" fill="#888"/>
</svg>
<svg style="left:1272px;top:882px" width="16" height="14" viewBox="0 0 16 14">
 <path d="M.5 1.5Q.5 .5 1.5 .5H6L7.5 2H14.5Q15.5 2 15.5 3V13.5H.5Z" fill="#d8d8d8" stroke="#b0b0b0"/>
 <rect x="1" y="4" width="14" height="9.5" fill="#e6e6e6" stroke="#b8b8b8" stroke-width=".6"/>
</svg>
<svg style="left:1293px;top:880px" width="16" height="17" viewBox="0 0 16 17">
 <path d="M3 .5V2M5.5 .5V2M8 .5V2M10.5 .5V2M13 .5V2M3 15V16.5M5.5 15V16.5M8 15V16.5M10.5 15V16.5M13 15V16.5M0 3.5H1.5M0 6H1.5M0 8.5H1.5M0 11H1.5M0 13.5H1.5M14.5 3.5H16M14.5 6H16M14.5 8.5H16M14.5 11H16M14.5 13.5H16" stroke="#222" stroke-width="1"/>
 <rect x="1.5" y="2" width="13" height="13" rx="1" fill="#c4c8f4" stroke="#333" stroke-width=".8"/>
 <path d="M4.8 4.5L8 12.5 11.2 4.5" stroke="#fff" stroke-width="2" fill="none"/>
</svg>
<div class="a" style="left:1314px;top:881px;width:1px;height:17px;background:#c8c6c2"></div>
<svg style="left:1321px;top:880px" width="17" height="17" viewBox="0 0 17 17">
 <defs><radialGradient id="vgl" cx=".35" cy=".35" r=".7"><stop offset="0" stop-color="#eef2fa"/><stop offset=".6" stop-color="#8a98c0"/><stop offset="1" stop-color="#3a4a78"/></radialGradient></defs>
 <ellipse cx="7.5" cy="9" rx="7" ry="7.5" fill="url(#vgl)" stroke="#333" stroke-width=".6"/>
 <path d="M10 2.5L15.5 8.5 10.5 15 8.5 13.5 12 9 8 4.5Z" fill="#3ac030" stroke="#1a6a10" stroke-width=".7"/>
</svg>
<svg style="left:1342px;top:880px" width="17" height="17" viewBox="0 0 17 17">
 <rect x=".5" y=".5" width="16" height="16" fill="#f0eadc" stroke="#5a4a30"/>
 <path d="M6 3H11V8H14L8.5 14 3 8H6Z" fill="#30c030" stroke="#1a6a10" stroke-width=".8"/>
</svg>
<div class="t" style="left:1362px;top:883px;font-size:14.5px;color:#48434a">Strg Rechts</div>
</body></html>
